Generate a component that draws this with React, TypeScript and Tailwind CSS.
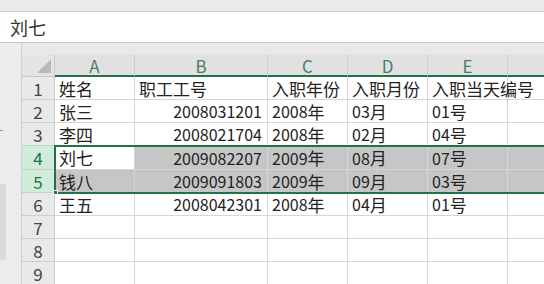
import React from 'react'

const font = { fontFamily: '"Noto Sans CJK SC", "Liberation Sans", sans-serif' }

const colWidths = ['w-[80px]', 'w-[133px]', 'w-[80px]', 'w-[80px]', 'w-[80px]', 'w-[40px]']
const letters = ['A', 'B', 'C', 'D', 'E', '']

type Row = { n: number; h: string; cells: string[] }

const rows: Row[] = [
  { n: 1, h: 'h-[23px]', cells: ['姓名', '职工工号', '入职年份', '入职月份', '入职当天编号', ''] },
  { n: 2, h: 'h-[23px]', cells: ['张三', '2008031201', '2008年', '03月', '01号', ''] },
  { n: 3, h: 'h-[23px]', cells: ['李四', '2008021704', '2008年', '02月', '04号', ''] },
  { n: 4, h: 'h-[24px]', cells: ['刘七', '2009082207', '2009年', '08月', '07号', ''] },
  { n: 5, h: 'h-[23px]', cells: ['钱八', '2009091803', '2009年', '09月', '03号', ''] },
  { n: 6, h: 'h-[23px]', cells: ['王五', '2008042301', '2008年', '04月', '01号', ''] },
  { n: 7, h: 'h-[23px]', cells: ['', '', '', '', '', ''] },
  { n: 8, h: 'h-[23px]', cells: ['', '', '', '', '', ''] },
  { n: 9, h: 'h-[23px]', cells: ['', '', '', '', '', ''] },
]

// CJK glyphs in the sheet render a touch larger than the digits
function CellText({ text }: { text: string }) {
  const parts = text.match(/[0-9]+|[^0-9]+/g) ?? []
  return (
    <>
      {parts.map((p, i) =>
        /[0-9]/.test(p) ? (
          <span key={i}>{p}</span>
        ) : (
          <span key={i} className="text-[17px]">
            {p}
          </span>
        )
      )}
    </>
  )
}

export default function App() {
  return (
    <div className="w-[544px] h-[284px] overflow-hidden bg-white flex flex-col text-[#222]" style={font}>
      <div className="h-[12px] shrink-0 bg-[#eaeaea] border-b border-[#cfcfcf]" />
      <div className="h-[31px] shrink-0 bg-white border-b border-[#c9c9c9] flex items-center pl-[10px] text-[18px] text-[#333]">
        刘七
      </div>
      <div className="flex flex-1 min-h-0">
        <div className="w-[22px] shrink-0 bg-[#ececec] border-r border-[#d0d0d0] flex flex-col">
          <div className="h-[87px]" />
          <div className="w-[3px] h-[1px] bg-[#999]" />
          <div className="h-[53px]" />
          <div className="w-[6px] h-[76px] bg-[#d9d9d9]" />
        </div>
        <div className="flex-1 flex flex-col bg-[#e8e8e8]">
          <div className="h-[12px] shrink-0" />
          <div className="relative flex flex-col bg-white">
            <div className="flex h-[22px]">
              <div className="w-[33px] shrink-0 bg-[#e4e4e4] border-r border-b border-[#c8c8c8] relative">
                <div className="absolute right-[3px] bottom-[3px] w-0 h-0 border-l-[14px] border-l-transparent border-b-[14px] border-b-[#b9b9b9]" />
              </div>
              {letters.map((l, i) => (
                <div
                  key={i}
                  className={`${colWidths[i]} shrink-0 bg-[#e1e1e1] border-r border-[#cdcdcd] border-b-2 border-b-[#217346] flex items-center justify-center text-[17px] text-[#4e7c64] leading-none`}
                >
                  {l}
                </div>
              ))}
            </div>
            {rows.map((r) => {
              const sel = r.n === 4 || r.n === 5
              return (
                <div key={r.n} className={`flex ${r.h}`}>
                  <div
                    className={`w-[33px] shrink-0 border-r border-b border-[#cdcdcd] flex items-center justify-center text-[17px] leading-none ${
                      sel ? 'bg-[#d2ecdc] text-[#217346]' : 'bg-[#e9e9e9] text-[#444]'
                    }`}
                  >
                    {r.n}
                  </div>
                  {r.cells.map((c, i) => {
                    const active = r.n === 4 && i === 0
                    return (
                      <div
                        key={i}
                        className={`${colWidths[i]} shrink-0 border-r border-b border-[#d6d6d6] flex items-center text-[16px] leading-none whitespace-nowrap overflow-visible ${
                          i === 1 && r.n > 1 ? 'justify-end pr-[5px]' : 'pl-[4px]'
                        } ${sel && !active ? 'bg-[#c6c6c6] border-[#b3b3b3]' : 'bg-transparent'}`}
                      >
                        <CellText text={c} />
                      </div>
                    )
                  })}
                </div>
              )
            })}
            <div className="absolute left-[32px] top-[90px] w-[520px] h-[49px] border-2 border-[#217346] pointer-events-none">
              <div className="absolute -left-[3px] -bottom-[3px] w-[5px] h-[5px] bg-[#217346] border border-white" />
            </div>
          </div>
        </div>
      </div>
    </div>
  )
}
